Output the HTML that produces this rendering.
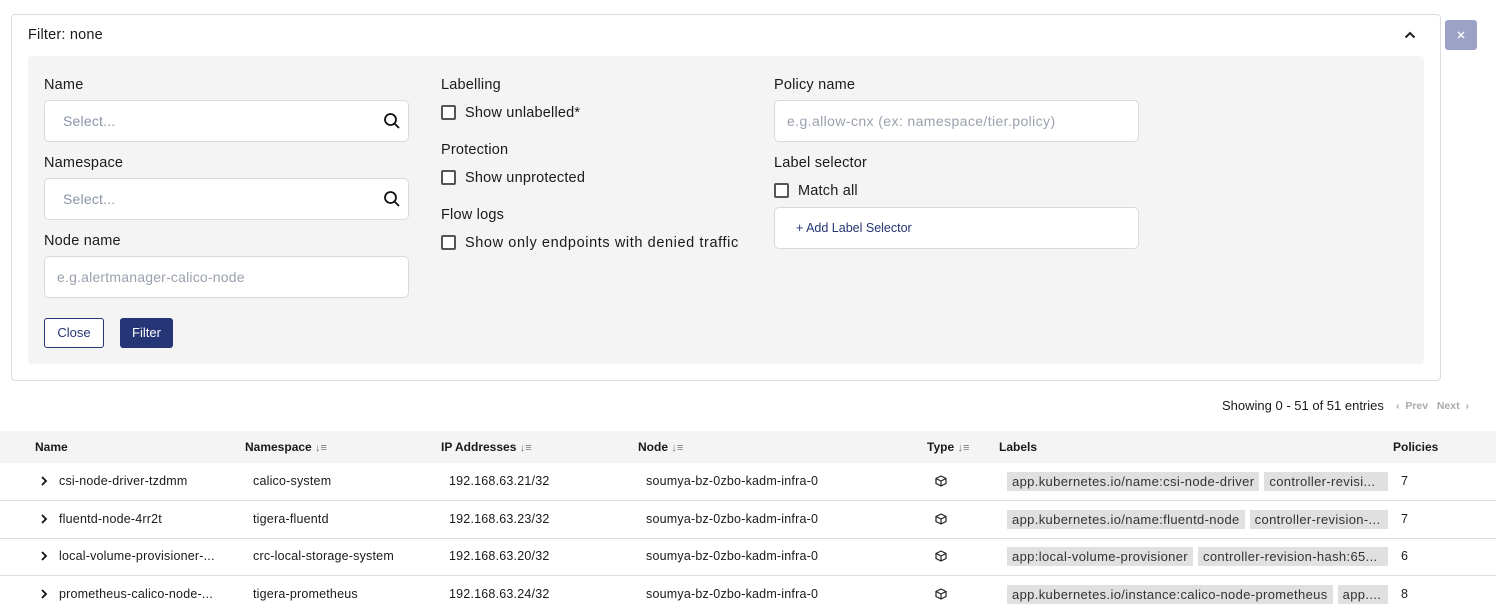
<!DOCTYPE html>
<html><head><meta charset="utf-8"><style>
*{box-sizing:border-box;margin:0;padding:0}
body{width:1496px;height:603px;overflow:hidden;background:#fff;font-family:"Liberation Sans",sans-serif;color:#1a1a1a;position:relative}
.abs{position:absolute}
.panel{left:11px;top:14px;width:1430px;height:367px;border:1px solid #dcdcdc;border-radius:4px}
.inner{left:28px;top:56px;width:1396px;height:308px;background:#f4f4f4;border-radius:4px}
.lbl{font-size:14.5px;color:#1a1a1a;letter-spacing:0.2px}
.inp{background:#fff;border:1px solid #d9d9d9;border-radius:5px;height:42px;font-size:14px;color:#8a93a8;padding:12px 0 0 18px;letter-spacing:0.2px}
.cb{width:15px;height:15px;border:2px solid #555;border-radius:2px;background:#fff}
.cbt{font-size:14.5px;letter-spacing:0.2px}
.th{font-size:12px;font-weight:bold;top:440px}
.td{font-size:12.5px;letter-spacing:0.2px}
.chips{display:flex;width:386px;white-space:nowrap}
.chip{display:block;background:#e0e0e0;padding:2px 5px;margin-right:5px;font-size:13px;color:#333;white-space:nowrap;letter-spacing:0.35px;flex:none}
.chip.last{flex:1;overflow:hidden;text-overflow:clip}
.row{left:0;width:1496px;height:1px;background:#dcdcdc}
.srt{color:#777;font-weight:normal;font-size:11px}
</style></head><body>
<div class="abs panel"></div>
<div class="abs" style="left:28px;top:27px;font-size:14.5px;letter-spacing:0.2px">Filter: none</div>
<svg class="abs" style="left:1403px;top:30px" width="14" height="10"><path d="M2.5 7.5 L7 3 L11.5 7.5" stroke="#222" stroke-width="2" fill="none"/></svg>
<div class="abs" style="left:1445px;top:20px;width:32px;height:30px;background:#9ba2c6;border-radius:3px"></div>
<svg class="abs" style="left:1456px;top:30px" width="10" height="10"><path d="M2 2L8 8M8 2L2 8" stroke="#fff" stroke-width="1.4"/></svg>
<div class="abs inner"></div>

<div class="abs lbl" style="left:44px;top:77px">Name</div>
<div class="abs inp" style="left:44px;top:100px;width:365px">Select...</div>
<svg class="abs" style="left:383px;top:112px" width="18" height="18"><circle cx="7.5" cy="7.5" r="5.5" stroke="#111" stroke-width="1.8" fill="none"/><path d="M11.5 11.5L16 16" stroke="#111" stroke-width="1.8"/></svg>
<div class="abs lbl" style="left:44px;top:155px">Namespace</div>
<div class="abs inp" style="left:44px;top:178px;width:365px">Select...</div>
<svg class="abs" style="left:383px;top:190px" width="18" height="18"><circle cx="7.5" cy="7.5" r="5.5" stroke="#111" stroke-width="1.8" fill="none"/><path d="M11.5 11.5L16 16" stroke="#111" stroke-width="1.8"/></svg>
<div class="abs lbl" style="left:44px;top:233px">Node name</div>
<div class="abs inp" style="left:44px;top:256px;width:365px;padding-left:12px;color:#9aa0ae">e.g.alertmanager-calico-node</div>
<div class="abs" style="left:44px;top:318px;width:60px;height:30px;border:1px solid #263576;border-radius:3px;font-size:13px;color:#263576;text-align:center;line-height:28px;background:#fff">Close</div>
<div class="abs" style="left:120px;top:318px;width:53px;height:30px;background:#263576;border-radius:3px;font-size:13px;color:#fff;text-align:center;line-height:30px">Filter</div>

<div class="abs lbl" style="left:441px;top:77px">Labelling</div>
<div class="abs cb" style="left:441px;top:105px"></div><div class="abs cbt" style="left:465px;top:105px">Show unlabelled*</div>
<div class="abs lbl" style="left:441px;top:142px">Protection</div>
<div class="abs cb" style="left:441px;top:170px"></div><div class="abs cbt" style="left:465px;top:170px">Show unprotected</div>
<div class="abs lbl" style="left:441px;top:207px">Flow logs</div>
<div class="abs cb" style="left:441px;top:235px"></div><div class="abs cbt" style="left:465px;top:235px;letter-spacing:0.6px">Show only endpoints with denied traffic</div>

<div class="abs lbl" style="left:774px;top:77px">Policy name</div>
<div class="abs inp" style="left:774px;top:100px;width:365px;padding-left:12px;color:#9aa0ae;letter-spacing:0.4px">e.g.allow-cnx (ex: namespace/tier.policy)</div>
<div class="abs lbl" style="left:774px;top:155px">Label selector</div>
<div class="abs cb" style="left:774px;top:183px"></div><div class="abs cbt" style="left:798px;top:183px">Match all</div>
<div class="abs" style="left:774px;top:207px;width:365px;height:42px;background:#fff;border:1px solid #d9d9d9;border-radius:5px;font-size:12.5px;color:#263576;padding:13px 0 0 21px">+ Add Label Selector</div>

<div class="abs" style="left:1222px;top:398px;font-size:13px">Showing 0 - 51 of 51 entries</div>
<div class="abs" style="left:1396px;top:400px;font-size:10.5px;color:#aaa;font-weight:bold">‹&nbsp; Prev&nbsp;&nbsp; Next &nbsp;›</div>

<div class="abs" style="left:0;top:431px;width:1496px;height:32px;background:#f4f4f4"></div>
<div class="abs th" style="left:35px">Name</div>
<div class="abs th" style="left:245px">Namespace <span class="srt">↓≡</span></div>
<div class="abs th" style="left:441px">IP Addresses <span class="srt">↓≡</span></div>
<div class="abs th" style="left:638px">Node <span class="srt">↓≡</span></div>
<div class="abs th" style="left:927px">Type <span class="srt">↓≡</span></div>
<div class="abs th" style="left:999px">Labels</div>
<div class="abs th" style="left:1393px">Policies</div>

<div class="abs row" style="top:500px"></div>
<div class="abs row" style="top:538px"></div>
<div class="abs row" style="top:575px"></div>

<svg class="abs" style="left:40px;top:476px" width="8" height="10"><path d="M2 1L6 5L2 9" stroke="#111" stroke-width="1.8" fill="none"/></svg>
<svg class="abs" style="left:40px;top:514px" width="8" height="10"><path d="M2 1L6 5L2 9" stroke="#111" stroke-width="1.8" fill="none"/></svg>
<svg class="abs" style="left:40px;top:551px" width="8" height="10"><path d="M2 1L6 5L2 9" stroke="#111" stroke-width="1.8" fill="none"/></svg>
<svg class="abs" style="left:40px;top:589px" width="8" height="10"><path d="M2 1L6 5L2 9" stroke="#111" stroke-width="1.8" fill="none"/></svg>

<div class="abs td" style="left:59px;top:474px">csi-node-driver-tzdmm</div>
<div class="abs td" style="left:253px;top:474px">calico-system</div>
<div class="abs td" style="left:449px;top:474px">192.168.63.21/32</div>
<div class="abs td" style="left:646px;top:474px">soumya-bz-0zbo-kadm-infra-0</div>
<div class="abs chips" style="left:1007px;top:472px"><span class="chip">app.kubernetes.io/name:csi-node-driver</span><span class="chip last">controller-revisi...</span></div>
<div class="abs td" style="left:1401px;top:474px">7</div>

<div class="abs td" style="left:59px;top:512px">fluentd-node-4rr2t</div>
<div class="abs td" style="left:253px;top:512px">tigera-fluentd</div>
<div class="abs td" style="left:449px;top:512px">192.168.63.23/32</div>
<div class="abs td" style="left:646px;top:512px">soumya-bz-0zbo-kadm-infra-0</div>
<div class="abs chips" style="left:1007px;top:510px"><span class="chip">app.kubernetes.io/name:fluentd-node</span><span class="chip last">controller-revision-...</span></div>
<div class="abs td" style="left:1401px;top:512px">7</div>

<div class="abs td" style="left:59px;top:549px">local-volume-provisioner-...</div>
<div class="abs td" style="left:253px;top:549px">crc-local-storage-system</div>
<div class="abs td" style="left:449px;top:549px">192.168.63.20/32</div>
<div class="abs td" style="left:646px;top:549px">soumya-bz-0zbo-kadm-infra-0</div>
<div class="abs chips" style="left:1007px;top:547px"><span class="chip">app:local-volume-provisioner</span><span class="chip last">controller-revision-hash:65...</span></div>
<div class="abs td" style="left:1401px;top:549px">6</div>

<div class="abs td" style="left:59px;top:587px">prometheus-calico-node-...</div>
<div class="abs td" style="left:253px;top:587px">tigera-prometheus</div>
<div class="abs td" style="left:449px;top:587px">192.168.63.24/32</div>
<div class="abs td" style="left:646px;top:587px">soumya-bz-0zbo-kadm-infra-0</div>
<div class="abs chips" style="left:1007px;top:585px"><span class="chip">app.kubernetes.io/instance:calico-node-prometheus</span><span class="chip last">app....</span></div>
<div class="abs td" style="left:1401px;top:587px">8</div>

<svg class="abs" style="left:935px;top:475px" width="12" height="12"><path d="M6 1L11 3.5V8.5L6 11L1 8.5V3.5Z M1 3.5L6 6L11 3.5 M6 6V11" stroke="#222" stroke-width="1.2" fill="none"/></svg>
<svg class="abs" style="left:935px;top:513px" width="12" height="12"><path d="M6 1L11 3.5V8.5L6 11L1 8.5V3.5Z M1 3.5L6 6L11 3.5 M6 6V11" stroke="#222" stroke-width="1.2" fill="none"/></svg>
<svg class="abs" style="left:935px;top:550px" width="12" height="12"><path d="M6 1L11 3.5V8.5L6 11L1 8.5V3.5Z M1 3.5L6 6L11 3.5 M6 6V11" stroke="#222" stroke-width="1.2" fill="none"/></svg>
<svg class="abs" style="left:935px;top:588px" width="12" height="12"><path d="M6 1L11 3.5V8.5L6 11L1 8.5V3.5Z M1 3.5L6 6L11 3.5 M6 6V11" stroke="#222" stroke-width="1.2" fill="none"/></svg>
</body></html>
